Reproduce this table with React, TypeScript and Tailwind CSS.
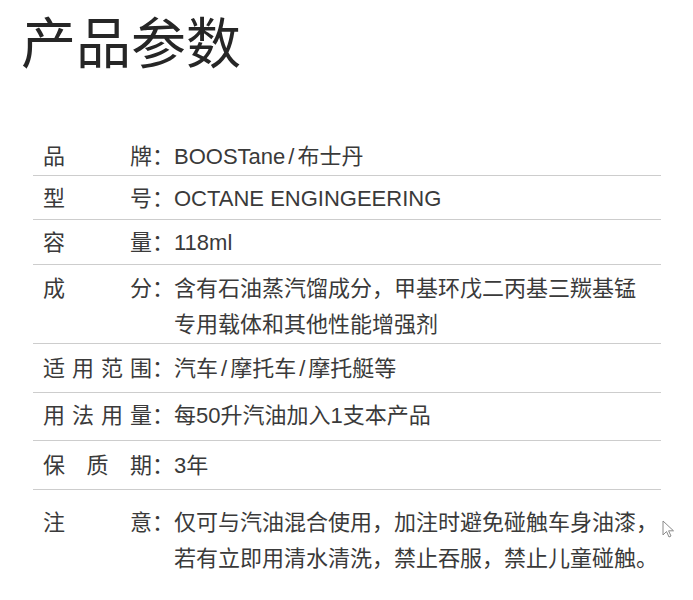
import React from "react";

type Row = {
  label: string;
  lines: string[];
  cls: string;
};

const rows: Row[] = [
  { label: "品牌", lines: ["BOOSTane/布士丹"], cls: "pt-[4px] pb-0" },
  { label: "型号", lines: ["OCTANE ENGINGEERING"], cls: "pt-[5px] pb-[2px]" },
  { label: "容量", lines: ["118ml"], cls: "pt-[5px] pb-[3px]" },
  {
    label: "成分",
    lines: ["含有石油蒸汽馏成分，甲基环戊二丙基三羰基锰", "专用载体和其他性能增强剂"],
    cls: "pt-[6px] pb-0",
  },
  { label: "适用范围", lines: ["汽车/摩托车/摩托艇等"], cls: "pt-[7px] pb-[5px]" },
  { label: "用法用量", lines: ["每50升汽油加入1支本产品"], cls: "pt-[5px] pb-[6px]" },
  { label: "保质期", lines: ["3年"], cls: "pt-[7px] pb-[5px]" },
  {
    label: "注意",
    lines: ["仅可与汽油混合使用，加注时避免碰触车身油漆，", "若有立即用清水清洗，禁止吞服，禁止儿童碰触。"],
    cls: "pt-[15px] pb-[10px]",
  },
];

function Line({ text }: { text: string }) {
  const parts = text.split("/");
  return (
    <div>
      {parts.map((p, k) => (
        <React.Fragment key={k}>
          {k > 0 && <span className="px-[3px]">/</span>}
          {p}
        </React.Fragment>
      ))}
    </div>
  );
}

export default function App() {
  return (
    <div
      className="relative w-[693px] h-[600px] overflow-hidden bg-white text-[#3a3a3a]"
      style={{ fontFamily: '"Liberation Sans", "Noto Sans CJK SC", sans-serif' }}
    >
      <h1
        className="pl-[21px] pt-[9px] text-[55px] leading-[60px] font-normal text-[#262626]"
        style={{ fontFamily: '"Noto Sans CJK SC", sans-serif' }}
      >
        产品参数
      </h1>
      <div className="ml-[33px] mt-[66px] w-[628px]">
        {rows.map((r, i) => (
          <div
            key={i}
            className={`flex pl-[10px] text-[22px] leading-[36px] ${r.cls} ${
              i < rows.length - 1 ? "border-b border-[#cdcdcd]" : ""
            }`}
          >
            <div className="w-[109px] shrink-0 [text-align-last:justify] text-justify">
              {r.label}
            </div>
            <div className="w-[22px] shrink-0">：</div>
            <div className="flex-1 whitespace-nowrap">
              {r.lines.map((l, j) => (
                <Line key={j} text={l} />
              ))}
            </div>
          </div>
        ))}
      </div>
      <svg
        className="absolute left-[662px] top-[520px]"
        width="14"
        height="20"
        viewBox="0 0 14 20"
      >
        <path
          d="M1 1 L1 15 L4.5 11.5 L7 17 L9 16 L6.6 10.8 L11.5 10.8 Z"
          fill="#ffffff"
          stroke="#8a8a8a"
          strokeWidth="1"
          strokeLinejoin="round"
        />
      </svg>
    </div>
  );
}
